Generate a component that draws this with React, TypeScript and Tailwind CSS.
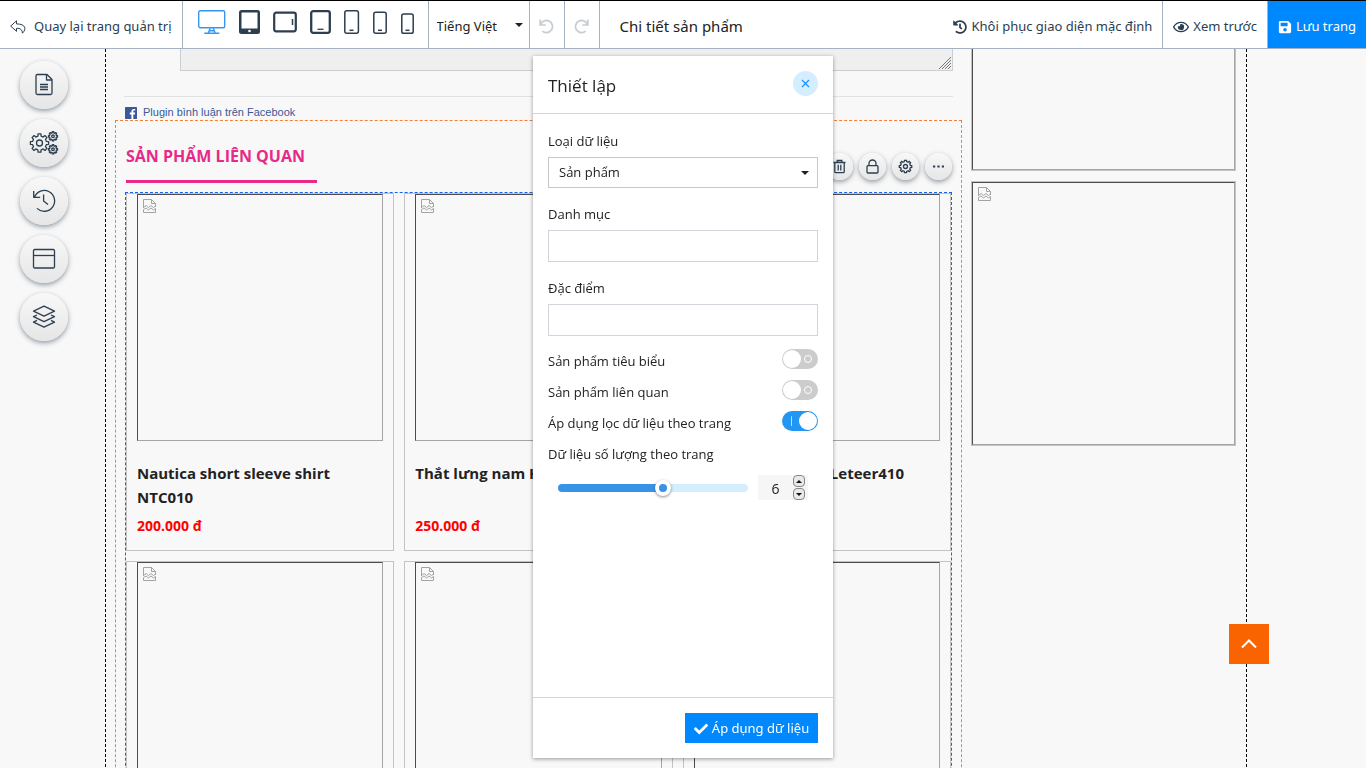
import { useState } from 'react'
import type { ReactNode } from 'react'
import { FaCheck, FaHistory, FaRegEye, FaSave } from 'react-icons/fa'

interface Product {
  name: string
  price: string
}

const products: Product[] = [
  { name: 'Nautica short sleeve shirt NTC010', price: '200.000 đ' },
  { name: 'Thắt lưng nam Hermes', price: '250.000 đ' },
  { name: 'Thắt lưng da nam Leteer410', price: '350.000 đ' },
  { name: 'Áo sơ mi nam dài tay', price: '300.000 đ' },
  { name: 'Áo thun nam cổ tròn', price: '150.000 đ' },
  { name: 'Quần jean nam', price: '400.000 đ' },
]

// Closed outline of a cog wheel with rounded teeth
function gearPath(cx: number, cy: number, outer: number, inner: number, teeth: number) {
  const step = (Math.PI * 2) / teeth
  const at = (r: number, a: number) => `${(cx + r * Math.cos(a)).toFixed(2)} ${(cy + r * Math.sin(a)).toFixed(2)}`
  let d = ''
  for (let i = 0; i < teeth; i++) {
    const a = i * step - Math.PI / 2
    d += `${i === 0 ? 'M' : 'L'}${at(inner, a - step * 0.3)} L${at(outer, a - step * 0.2)} L${at(outer, a + step * 0.2)} L${at(inner, a + step * 0.3)} `
  }
  return d + 'Z'
}

function Caret({ className }: { className: string }) {
  return (
    <svg viewBox="0 0 8 4" className={`pointer-events-none absolute h-1 w-2 ${className}`} aria-hidden="true">
      <path d="M0 0h8L4 4z" fill="#222" />
    </svg>
  )
}

function BrokenImage() {
  return (
    <svg viewBox="0 0 13 14" className="h-3.5 w-[13px]" fill="none" stroke="#a3a3a3" aria-hidden="true">
      <path d="M0.5 9V0.5H8.5L12.5 4.5V8M8.5 0.5V4.5H12.5" />
      <path d="M0.5 8.5L3 6.5L5.5 8.5L8 6.5L10.5 8.5L12.5 7" />
      <path d="M0.5 13.5V10.5L3 9L5.5 11L8 9L10.5 11L12.5 9.5V13.5Z" />
    </svg>
  )
}

function MissingPicture({ className }: { className: string }) {
  return (
    <div className={`border border-t-[#4c4c4c] border-l-[#4c4c4c] border-r-[#a5a5a5] border-b-[#a5a5a5] pt-1 pl-[5px] ${className}`}>
      <BrokenImage />
    </div>
  )
}

const devices: { label: string; icon: ReactNode }[] = [
  {
    label: 'Máy tính',
    icon: (
      <svg width="28" height="24" viewBox="0 0 28 24" fill="none" stroke="#3797f0" strokeWidth="1.4">
        <rect x="0.7" y="0.7" width="26" height="17" rx="1.5" />
        <path d="M12.3 18l-2 5M15.2 18l2 5M6.3 23.3h15M11.5 20.8h4.5" />
      </svg>
    ),
  },
  {
    label: 'Máy tính bảng dọc',
    icon: (
      <svg width="21" height="24" viewBox="0 0 21 24">
        <rect width="21" height="24" rx="2.5" fill="#2c3e50" />
        <rect x="2.5" y="2.5" width="16" height="16" fill="#fff" />
        <circle cx="10.5" cy="21" r="1.3" fill="#fff" />
      </svg>
    ),
  },
  {
    label: 'Máy tính bảng ngang',
    icon: (
      <svg width="24" height="24" viewBox="0 0 24 24" fill="none" stroke="#2c3e50">
        <rect x="1.2" y="2.7" width="21.6" height="18.6" rx="2" strokeWidth="2.2" />
        <path d="M19.5 9v6" strokeWidth="1.5" />
      </svg>
    ),
  },
  {
    label: 'Máy tính bảng nhỏ',
    icon: (
      <svg width="21" height="24" viewBox="0 0 21 24" fill="none" stroke="#2c3e50">
        <rect x="1.2" y="1.2" width="18.6" height="21.6" rx="2" strokeWidth="2.3" />
        <path d="M7.5 19.3h6" strokeWidth="1.3" />
      </svg>
    ),
  },
  {
    label: 'Điện thoại lớn',
    icon: (
      <svg width="16" height="24" viewBox="0 0 16 24" fill="none" stroke="#2c3e50" strokeWidth="1.5">
        <rect x="0.8" y="0.8" width="13.6" height="22.4" rx="2" />
        <path d="M5.5 20.3h4" />
      </svg>
    ),
  },
  {
    label: 'Điện thoại vừa',
    icon: (
      <svg width="15" height="24" viewBox="0 0 15 24" fill="none" stroke="#2c3e50" strokeWidth="1.5">
        <rect x="0.8" y="2.3" width="12.4" height="20.9" rx="2" />
        <path d="M5 20.3h4" />
      </svg>
    ),
  },
  {
    label: 'Điện thoại nhỏ',
    icon: (
      <svg width="13" height="24" viewBox="0 0 13 24" fill="none" stroke="#2c3e50" strokeWidth="1.5">
        <rect x="0.8" y="4" width="11.4" height="19.2" rx="1.8" />
        <path d="M4.5 20.3h4" />
      </svg>
    ),
  },
]

const tools: { label: string; icon: ReactNode }[] = [
  {
    label: 'Trang',
    icon: (
      <>
        <path d="M17.5 13.5h9.5l5 5v13.5a1.5 1.5 0 0 1-1.5 1.5h-13a1.5 1.5 0 0 1-1.5-1.5v-17a1.5 1.5 0 0 1 1.5-1.5z" />
        <path d="M26.5 13.5v5.5h5.5M20 23.5h8M20 26h8M20 28.5h8" />
      </>
    ),
  },
  {
    label: 'Cài đặt',
    icon: (
      <>
        <path d={gearPath(19.5, 24, 9.2, 7, 8)} />
        <circle cx="19.5" cy="24" r="3" />
        <path d={gearPath(33, 17.3, 4.6, 3.5, 8)} />
        <circle cx="33" cy="17.3" r="1.3" />
        <path d={gearPath(33, 30.3, 4.6, 3.5, 8)} />
        <circle cx="33" cy="30.3" r="1.3" />
      </>
    ),
  },
  {
    label: 'Lịch sử',
    icon: <path d="M14.5 20.2A10.4 10.4 0 1 1 17 31.4M13.7 14v6.3h6.5M23.6 17.5v6.5l4.4 3.4" />,
  },
  {
    label: 'Bố cục',
    icon: (
      <>
        <rect x="13.5" y="14.5" width="21" height="18.5" rx="1.3" />
        <path d="M13.5 20.5h21" />
      </>
    ),
  },
  {
    label: 'Lớp',
    icon: (
      <>
        <path d="M24 13.2l10.5 5-10.5 5-10.5-5z" />
        <path d="M17 22l-3.5 1.7 10.5 5 10.5-5-3.5-1.7M17 27.4l-3.5 1.7 10.5 5 10.5-5-3.5-1.7" />
      </>
    ),
  },
]

const blockActions: { label: string; icon: ReactNode }[] = [
  {
    label: 'Xóa',
    icon: (
      <path d="M7.5 9.5h12M8.8 9.5v9.2a1 1 0 0 0 1 1h7.4a1 1 0 0 0 1-1V9.5M11.2 9.2V7.5h4.6v1.7M12.2 11.8v5.7M14.8 11.8v5.7" />
    ),
  },
  {
    label: 'Khóa',
    icon: (
      <>
        <rect x="8" y="12.7" width="11" height="7.3" rx="1" />
        <path d="M10 12.5v-2a3.5 3.5 0 0 1 7 0v2" />
      </>
    ),
  },
  {
    label: 'Cài đặt khối',
    icon: (
      <>
        <path d={gearPath(13.5, 13.5, 6.3, 5, 8)} />
        <circle cx="13.5" cy="13.5" r="2" />
      </>
    ),
  },
  {
    label: 'Thêm',
    icon: <path d="M8 13.5h2.2M12.4 13.5h2.2M16.8 13.5h2.2" strokeWidth="2.2" />,
  },
]

function Toolbar() {
  return (
    <header className="flex h-[49px] shrink-0 border-t border-b border-t-black border-b-[#a4b3bf] bg-white font-['Noto_Sans',sans-serif] text-[#2c3e50]">
      <a href="#" className="flex items-center gap-2 border-r border-[#a4b3bf] px-2.5 pt-1 text-[13px]">
        <svg width="16" height="14" viewBox="0 0 16 14" fill="none" stroke="#2c3e50" strokeWidth="1" strokeLinejoin="round">
          <path d="M6.5 0.8L0.7 6.1L6.5 11.3V8.3C10.5 8.2 12.2 9.6 12.4 13.2C16.6 9.2 16 4 6.5 3.9Z" />
        </svg>
        Quay lại trang quản trị
      </a>
      <div className="flex items-start gap-[13px] border-r border-[#a4b3bf] pt-[9px] pr-3.5 pl-[15px]">
        {devices.map((device) => (
          <button key={device.label} type="button" aria-label={device.label}>
            {device.icon}
          </button>
        ))}
      </div>
      <div className="relative flex w-[101px] border-r border-[#a4b3bf]">
        <select aria-label="Ngôn ngữ" className="w-full appearance-none bg-transparent pt-1 pl-2 text-[13px] text-[#222]">
          <option>Tiếng Việt</option>
          <option>English</option>
        </select>
        <Caret className="top-[22px] right-1.5" />
      </div>
      <button type="button" aria-label="Hoàn tác" className="flex w-[35px] items-center justify-center border-r border-[#a4b3bf] pt-1">
        <svg width="15" height="15" viewBox="0 0 15 15" fill="none" stroke="#c5ccd2" strokeWidth="1.7">
          <path d="M1.2 0.5V6H6.7M1.6 5.6A6.1 6.1 0 1 1 3.2 12" />
        </svg>
      </button>
      <button type="button" aria-label="Làm lại" className="flex w-[35px] items-center justify-center border-r border-[#a4b3bf] pt-1">
        <svg width="15" height="15" viewBox="0 0 15 15" fill="none" stroke="#c5ccd2" strokeWidth="1.7">
          <path d="M13.8 0.5V6H8.3M13.4 5.6A6.1 6.1 0 1 0 11.8 12" />
        </svg>
      </button>
      <h1 className="flex flex-1 items-center pt-1 pl-5 text-[15px] text-[#222]">Chi tiết sản phẩm</h1>
      <button type="button" className="flex items-center gap-1 border-r border-[#a4b3bf] px-2.5 pt-1 text-[13px]">
        <FaHistory className="size-3.5" />
        Khôi phục giao diện mặc định
      </button>
      <button type="button" className="flex items-center gap-1 border-r border-[#a4b3bf] px-2.5 pt-1 text-[13px]">
        <FaRegEye className="size-4" />
        Xem trước
      </button>
      <button type="button" className="flex items-center gap-1 bg-[#0088ff] px-2.5 pt-1 text-[13px] text-white">
        <FaSave className="size-3.5" />
        Lưu trang
      </button>
    </header>
  )
}

function ToolRail() {
  return (
    <nav aria-label="Công cụ" className="fixed top-[61px] left-5 flex flex-col gap-2.5">
      {tools.map((tool) => (
        <button
          key={tool.label}
          type="button"
          aria-label={tool.label}
          className="size-12 rounded-full bg-linear-to-b from-[#f8f8f8] to-[#e6e6e6] shadow-[0_2px_5px_rgba(44,62,80,0.5)]"
        >
          <svg width="48" height="48" viewBox="0 0 48 48" fill="none" stroke="#2c3e50" strokeWidth="1.3" strokeLinejoin="round">
            {tool.icon}
          </svg>
        </button>
      ))}
    </nav>
  )
}

function ProductCard({ product }: { product: Product }) {
  return (
    <article className="border border-[#c3c3c3] px-2.5 pb-3.5">
      <MissingPicture className="aspect-[246/247]" />
      <h3 className="mt-5 min-h-12 text-[15px] leading-6 font-bold text-[#222]">{product.name}</h3>
      <p className="mt-1.5 text-[14px] leading-[21px] font-bold text-[#f00]">{product.price}</p>
    </article>
  )
}

function PageCanvas() {
  return (
    <main className="min-h-0 flex-1 overflow-y-auto pr-3.5 [scrollbar-width:none]">
      <div className="mx-auto flex min-h-full max-w-[1142px] gap-[9px] border-x border-dashed border-black pr-2.5 pl-[9px]">
        <div className="min-w-0 flex-1">
          <div className="px-[9px]">
            <div className="relative ml-14">
              <textarea
                disabled
                aria-label="Bình luận"
                className="block h-[22px] w-full resize-none border border-t-0 border-[#c9ced3] bg-[#efefef]"
              />
              <svg width="12" height="12" viewBox="0 0 12 12" stroke="#777" className="pointer-events-none absolute right-0.5 bottom-0.5" aria-hidden="true">
                <path d="M0 12L12 0M3 12L12 3M6 12L12 6M9 12L12 9" />
              </svg>
            </div>
            <hr className="mt-[25px] border-[#e1e1e1]" />
            <a href="#" className="flex h-[23px] items-center gap-1.5 pt-2 pl-px font-['Liberation_Sans',sans-serif] text-[11px] text-[#3b5998]">
              <svg width="12" height="12" viewBox="0 0 12 12" aria-hidden="true">
                <rect width="12" height="12" rx="0.6" fill="#3b5998" />
                <path d="M8.3 12V7.4h1.6l.2-1.8H8.3V4.5c0-.5.2-.9.9-.9h1V2C10 2 9.4 1.9 8.8 1.9 7.3 1.9 6.4 2.8 6.4 4.3v1.3H4.8v1.8h1.6V12z" fill="#fff" />
              </svg>
              Plugin bình luận trên Facebook
            </a>
          </div>
          <section className="border border-dashed border-[#f58033] px-[9px]">
            <div className="flex items-end justify-between pt-[23px] pl-px">
              <h2 className="border-b-[3px] border-[#e72a88] pr-3 pb-3 text-[16px] leading-6 font-bold text-[#e72a88]">
                SẢN PHẨM LIÊN QUAN
              </h2>
              <div className="flex gap-1.5 pb-[3px]">
                {blockActions.map((action) => (
                  <button
                    key={action.label}
                    type="button"
                    aria-label={action.label}
                    className="size-[27px] rounded-full bg-linear-to-b from-[#f8f8f8] to-[#e6e6e6] shadow-[0_2px_5px_rgba(44,62,80,0.5)]"
                  >
                    <svg width="27" height="27" viewBox="0 0 27 27" fill="none" stroke="#2c3e50" strokeWidth="1.3">
                      {action.icon}
                    </svg>
                  </button>
                ))}
              </div>
            </div>
            <div className="mt-[9px] grid grid-cols-3 gap-2.5 border border-dashed border-[#1463e8]">
              {products.map((product) => (
                <ProductCard key={product.name} product={product} />
              ))}
            </div>
          </section>
        </div>
        <aside className="flex w-[265px] flex-col gap-2.5">
          <div className="h-[122px] border border-t-0 border-[#c3c3c3]">
            <div className="h-full border border-t-0 border-l-[#4c4c4c] border-r-[#a5a5a5] border-b-[#a5a5a5]" />
          </div>
          <div className="border border-[#c3c3c3]">
            <MissingPicture className="aspect-square" />
          </div>
        </aside>
      </div>
    </main>
  )
}

function Toggle({ id, label, defaultChecked }: { id: string; label: string; defaultChecked?: boolean }) {
  return (
    <div className="flex h-[31px] items-start justify-between">
      <label htmlFor={id} className="leading-[31px]">
        {label}
      </label>
      <input
        id={id}
        type="checkbox"
        defaultChecked={defaultChecked}
        className="relative mt-[3px] h-5 w-9 appearance-none rounded-full bg-[#ccc] before:absolute before:top-px before:left-px before:size-[18px] before:rounded-full before:bg-white after:absolute after:top-1.5 after:right-1.5 after:size-2 after:rounded-full after:border after:border-white checked:bg-[#2196f3] checked:before:left-[17px] checked:after:top-[5px] checked:after:right-[26px] checked:after:h-2.5 checked:after:w-px checked:after:border-0 checked:after:bg-white/70"
      />
    </div>
  )
}

function SettingsPanel() {
  const [count, setCount] = useState(6)
  const clamp = (n: number) => Math.min(10, Math.max(1, n))
  const percent = ((count - 1) / 9) * 100

  return (
    <section
      aria-label="Thiết lập"
      className="fixed inset-x-0 top-14 bottom-2.5 mx-auto flex w-[300px] flex-col bg-white text-[13px] text-[#222] shadow-[0_1px_4px_rgba(0,0,0,0.4)]"
    >
      <div className="flex h-[58px] items-start justify-between border-b border-[#d1d5db] px-[15px] pt-[15px]">
        <h2 className="text-[17px] leading-[30px]">Thiết lập</h2>
        <button type="button" aria-label="Đóng" className="flex size-[25px] items-center justify-center rounded-full bg-[#d4edff]">
          <svg width="9" height="9" viewBox="0 0 9 9" stroke="#1e90ff" strokeWidth="1.2">
            <path d="M1 1l7 7M8 1l-7 7" />
          </svg>
        </button>
      </div>

      <div className="flex-1 px-[15px] pt-[17px]">
        <label htmlFor="data-type" className="block leading-5">
          Loại dữ liệu
        </label>
        <div className="relative mt-1.5 mb-4">
          <select id="data-type" className="block h-[31px] w-full appearance-none border border-[#c8c8c8] bg-white pt-px pl-2.5">
            <option>Sản phẩm</option>
            <option>Bài viết</option>
          </select>
          <Caret className="top-3.5 right-[9px]" />
        </div>
        <label htmlFor="category" className="block leading-5">
          Danh mục
        </label>
        <input id="category" type="text" className="mt-1.5 mb-4 block h-8 w-full border border-[#d1d5db] px-2.5" />
        <label htmlFor="feature" className="block leading-5">
          Đặc điểm
        </label>
        <input id="feature" type="text" className="mt-1.5 mb-2.5 block h-8 w-full border border-[#d1d5db] px-2.5" />

        <Toggle id="featured" label="Sản phẩm tiêu biểu" />
        <Toggle id="related" label="Sản phẩm liên quan" />
        <Toggle id="page-filter" label="Áp dụng lọc dữ liệu theo trang" defaultChecked />

        <label htmlFor="per-page" className="block leading-[31px]">
          Dữ liệu số lượng theo trang
        </label>
        <div className="mt-[5px] flex items-center gap-2.5 px-2.5">
          <input
            id="per-page"
            type="range"
            min={1}
            max={10}
            value={count}
            onChange={(e) => setCount(Number(e.target.value))}
            style={{ backgroundImage: `linear-gradient(to right, #3793e8 ${percent}%, #d4edff ${percent}%)` }}
            className="h-2 min-w-0 flex-1 appearance-none rounded-full [&::-webkit-slider-thumb]:size-4 [&::-webkit-slider-thumb]:appearance-none [&::-webkit-slider-thumb]:rounded-full [&::-webkit-slider-thumb]:border-4 [&::-webkit-slider-thumb]:border-white [&::-webkit-slider-thumb]:bg-[#3793e8] [&::-webkit-slider-thumb]:shadow-[0_1px_3px_rgba(44,62,80,0.6)]"
          />
          <div className="flex h-[25px] w-[50px] items-center bg-[#f6f6f6] pr-[3px]">
            <input
              type="number"
              aria-label="Số lượng"
              value={count}
              onChange={(e) => setCount(clamp(Number(e.target.value)))}
              className="min-w-0 flex-1 appearance-none bg-transparent pt-0.5 text-center text-[14px] [&::-webkit-inner-spin-button]:appearance-none"
            />
            <div className="flex flex-col gap-px">
              <button
                type="button"
                aria-label="Tăng"
                onClick={() => setCount(clamp(count + 1))}
                className="flex size-3 items-center justify-center rounded-[4px] border border-[#888] bg-[#e9e9e9]"
              >
                <svg width="6" height="3" viewBox="0 0 6 3">
                  <path d="M3 0l3 3H0z" fill="#111" />
                </svg>
              </button>
              <button
                type="button"
                aria-label="Giảm"
                onClick={() => setCount(clamp(count - 1))}
                className="flex size-3 items-center justify-center rounded-[4px] border border-[#888] bg-[#e9e9e9]"
              >
                <svg width="6" height="3" viewBox="0 0 6 3">
                  <path d="M0 0h6L3 3z" fill="#111" />
                </svg>
              </button>
            </div>
          </div>
        </div>
      </div>

      <div className="flex justify-end border-t border-[#d1d5db] p-[15px]">
        <button
          type="button"
          className="flex h-[30px] min-w-[133px] items-center justify-center gap-1 bg-[#0088ff] px-2 pt-0.5 font-['Noto_Sans',sans-serif] text-[13px] text-white"
        >
          <FaCheck className="size-3.5" />
          Áp dụng dữ liệu
        </button>
      </div>
    </section>
  )
}

export default function App() {
  return (
    <div className="flex h-screen flex-col bg-[#f8f8f8] font-['Open_Sans','Noto_Sans',sans-serif]">
      <Toolbar />
      <PageCanvas />
      <ToolRail />
      <SettingsPanel />
      <button
        type="button"
        aria-label="Lên đầu trang"
        className="fixed right-[97px] bottom-[104px] flex size-10 items-center justify-center bg-[#fa6400]"
      >
        <svg width="16" height="10" viewBox="0 0 16 10" fill="none" stroke="#fff" strokeWidth="2">
          <path d="M1 8.5l7-7 7 7" />
        </svg>
      </button>
    </div>
  )
}
